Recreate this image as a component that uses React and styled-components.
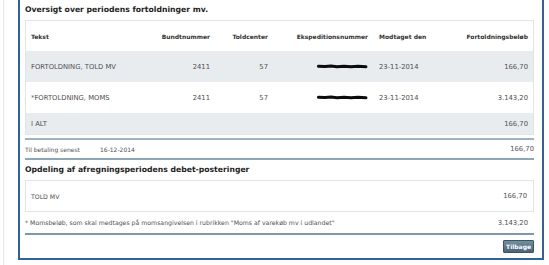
import React from 'react';
import styled, { createGlobalStyle } from 'styled-components';

const BORDER_BLUE = '#2f62a0';
const ROW_GREY = '#e8ecef';
const BOX_BORDER = '#e1e5e8';
const RULE = '#9fb4c3';

const GlobalStyle = createGlobalStyle`
  html, body {
    margin: 0;
    padding: 0;
    background: #ffffff;
  }

  body {
    font-family: 'DejaVu Sans', Verdana, sans-serif;
    color: #505050;
  }
`;

const Page = styled.div`
  display: flex;
  height: 265px;
  padding-left: 3px;
  overflow: hidden;
`;

const Gutter = styled.div`
  display: flex;
  flex: 1 0 auto;
  border-left: 1px solid #e6e6e6;
  padding-left: 14px;
`;

const Panel = styled.div`
  display: flex;
  flex-direction: column;
  width: 509px;
  height: 258px;
  border: 2px solid ${BORDER_BLUE};
  border-top: none;
  padding: 0 8px 0 5px;
`;

const Heading = styled.h2`
  margin: 0;
  height: 20px;
  line-height: 20px;
  font-size: 7.7px;
  font-weight: bold;
  color: #1e1e1e;
  white-space: nowrap;
`;

const Box = styled.div`
  border: 1px solid ${BOX_BORDER};
`;

const Row = styled.div`
  display: grid;
  grid-template-columns: 124px 60px 58px 100px 72px 88px;
  align-items: center;
  height: ${({ $h }) => $h}px;
  background: ${({ $grey }) => ($grey ? ROW_GREY : '#ffffff')};
  font-size: ${({ $head }) => ($head ? 6 : 6.8)}px;
  font-weight: ${({ $head }) => ($head ? 'bold' : 'normal')};
  color: ${({ $head }) => ($head ? '#333333' : '#505050')};
  white-space: nowrap;
`;

const Cell = styled.div`
  display: flex;
  justify-content: ${({ $align }) => ($align === 'right' ? 'flex-end' : 'flex-start')};
  padding-left: ${({ $pl }) => $pl || 0}px;
`;

const Rule = styled.div`
  height: 2px;
  background: ${({ $color }) => $color || RULE};
`;

const InfoRow = styled.div`
  display: flex;
  align-items: center;
  height: ${({ $h }) => $h || 18}px;
  font-size: ${({ $size }) => $size || 6}px;
  white-space: nowrap;
`;

const InfoLabel = styled.span`
  width: 75px;
`;

const InfoValue = styled.span`
  flex: 1 0 auto;
`;

const Amount = styled.span`
  margin-left: auto;
  text-align: right;
  font-size: 6.8px;
`;

const SingleRow = styled.div`
  display: flex;
  align-items: center;
  height: 30px;
  padding: 0 5px;
  font-size: 6.2px;
`;

const Footer = styled.div`
  display: flex;
  justify-content: flex-end;
  align-items: center;
  flex: 1 0 auto;
`;

const BackButton = styled.button`
  height: 13px;
  padding: 0 2px;
  border: 1px solid #3b5565;
  border-radius: 1px;
  background: linear-gradient(#71909f, #4a6676);
  color: #ffffff;
  font-family: 'DejaVu Sans', Verdana, sans-serif;
  font-size: 6px;
  font-weight: bold;
  line-height: 11px;
  cursor: pointer;
`;

const Scribble = () => (
  <svg width="51" height="5" viewBox="0 0 51 5">
    <path
      d="M1.5 2.2 L8 2.6 L14 2.1 L20 2.7 L27 2.2 L34 2.8 L41 2.3 L49 2.7"
      stroke="#0c0c0c"
      strokeWidth="3"
      fill="none"
      strokeLinecap="round"
      strokeLinejoin="round"
    />
  </svg>
);

const rows = [
  { text: 'FORTOLDNING, TOLD MV', grey: true, amount: '166,70' },
  { text: '*FORTOLDNING, MOMS', grey: false, amount: '3.143,20' },
];

export default function App() {
  return (
    <>
      <GlobalStyle />
      <Page>
        <Gutter>
          <Panel>
            <Heading>Oversigt over periodens fortoldninger mv.</Heading>
            <Box>
              <Row $h={30} $head>
                <Cell $pl={5}>Tekst</Cell>
                <Cell $align="right">Bundtnummer</Cell>
                <Cell $align="right">Toldcenter</Cell>
                <Cell $align="right">Ekspeditionsnummer</Cell>
                <Cell $pl={11}>Modtaget den</Cell>
                <Cell $align="right">Fortoldningsbeløb</Cell>
              </Row>
              {rows.map((r) => (
                <Row key={r.text} $h={31} $grey={r.grey}>
                  <Cell $pl={5}>{r.text}</Cell>
                  <Cell $align="right">2411</Cell>
                  <Cell $align="right">57</Cell>
                  <Cell $align="right"><Scribble /></Cell>
                  <Cell $pl={11}>23-11-2014</Cell>
                  <Cell $align="right">{r.amount}</Cell>
                </Row>
              ))}
              <Row $h={21} $grey>
                <Cell $pl={5}>I ALT</Cell>
                <Cell />
                <Cell />
                <Cell />
                <Cell />
                <Cell $align="right">166,70</Cell>
              </Row>
            </Box>
            <div style={{ height: 3 }} />
            <Rule />
            <InfoRow>
              <InfoLabel>Til betaling senest</InfoLabel>
              <InfoValue>16-12-2014</InfoValue>
              <Amount>166,70</Amount>
            </InfoRow>
            <Rule $color="#8ea6b6" />
            <Heading>Opdeling af afregningsperiodens debet-posteringer</Heading>
            <Box>
              <SingleRow>
                <span>TOLD MV</span>
                <Amount style={{ marginRight: 1 }}>166,70</Amount>
              </SingleRow>
            </Box>
            <InfoRow $h={21} $size={6.2}>
              <span>* Momsbeløb, som skal medtages på momsangivelsen i rubrikken "Moms af varekøb mv i udlandet"</span>
              <Amount style={{ marginRight: 6 }}>3.143,20</Amount>
            </InfoRow>
            <Rule $color="#7f98a9" />
            <Footer>
              <BackButton>Tilbage</BackButton>
            </Footer>
          </Panel>
        </Gutter>
      </Page>
    </>
  );
}
